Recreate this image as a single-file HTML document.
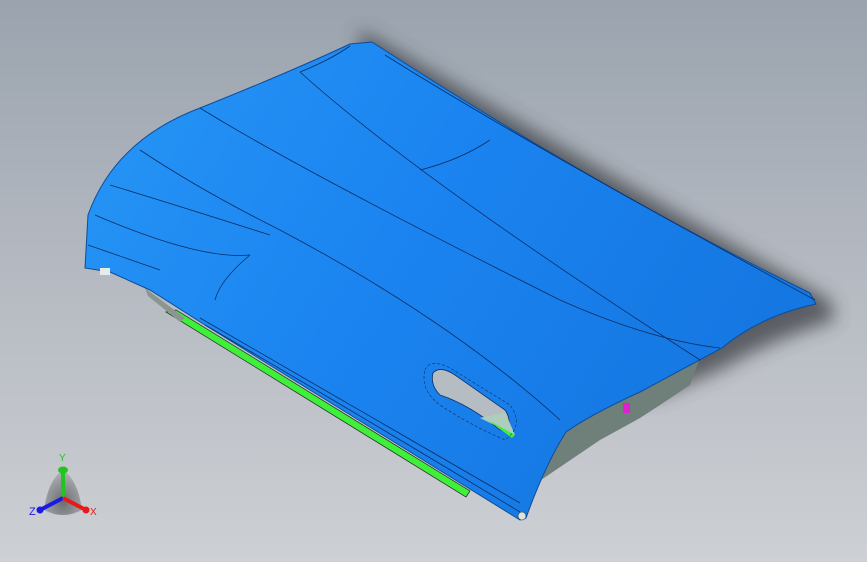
<!DOCTYPE html>
<html><head><style>
html,body{margin:0;padding:0;width:867px;height:562px;overflow:hidden;}
body{background:linear-gradient(180deg,#9aa3ae 0%,#b3b8c0 45%,#cdd0d4 100%);font-family:"Liberation Sans",sans-serif;}
svg{position:absolute;left:0;top:0}
</style></head><body>
<svg width="867" height="562" viewBox="0 0 867 562">
<defs>
<filter id="bl" x="-20%" y="-20%" width="140%" height="140%"><feGaussianBlur stdDeviation="9"/></filter>
<linearGradient id="bg1" x1="0" y1="0" x2="1" y2="0.4">
<stop offset="0" stop-color="#2796f6"/><stop offset="0.5" stop-color="#1b84f0"/><stop offset="1" stop-color="#1577e2"/>
</linearGradient>
<radialGradient id="tri" cx="0.5" cy="0.7" r="0.6"><stop offset="0" stop-color="#444"/><stop offset="1" stop-color="#9a9da2"/></radialGradient>
</defs>
<path d="M360,30 Q600,170 830,300 L835,320 Q770,340 720,370 L650,400 L360,60 Z" fill="#3a3d42" opacity="0.75" filter="url(#bl)"/>
<!-- underside gray -->
<path d="M538,482 L560,432 Q600,405 665,378 L700,358 L690,385 L660,405 L640,418 L600,440 Z" fill="#6f7f7a"/>
<rect x="623" y="403" width="7" height="10" fill="#e020d0"/>
<!-- green strip -->
<path d="M166,312 L176,310 L470,491 L466,497 Z" fill="#3ef03a" stroke="#222" stroke-width="0.7"/>
<path d="M145,288 L185,318 L180,322 L148,296 Z" fill="#8a9690"/>
<path d="M85,268 L88,215 Q115,140 200,108 Q290,72 350,44 L372,42 Q600,190 810,293 L816,304 Q760,316 722,348 Q690,365 640,392 Q590,415 566,432 Q545,465 526,518 L520,520 Q400,445 205,325 L150,290 L110,272 Z" fill="url(#bg1)" stroke="#0d4d9a" stroke-width="1"/>
<g fill="none" stroke="#0b2f66" stroke-width="0.8">
<path d="M350,46 Q330,60 300,72"/>
<path d="M300,72 Q420,180 700,360"/>
<path d="M200,108 Q300,170 560,300 Q650,340 720,348"/>
<path d="M140,150 Q200,190 280,230 Q450,320 560,420"/>
<path d="M110,185 Q160,200 270,235"/>
<path d="M95,215 Q200,260 250,255"/>
<path d="M88,245 L160,270"/>
<path d="M250,255 Q220,280 215,300"/>
<path d="M385,55 Q520,140 815,300"/>
<path d="M490,140 Q460,160 420,170"/>
<path d="M200,318 Q350,405 520,503"/>
<path d="M205,325 Q360,415 520,512"/>
</g>
<path d="M433,373 Q440,365 455,375 L505,410 Q515,425 500,430 Q470,405 440,395 Q430,385 433,373 Z" fill="#b5bcc2" stroke="#0b2f66" stroke-width="0.8"/>
<path d="M480,418 L505,412 L515,435 Z" fill="#aecdbd"/>
<path d="M488,420 L515,435 L512,438 Z" fill="#3ef03a"/>
<path d="M425,370 Q430,358 450,368 L510,405 Q525,425 505,440 Q470,425 440,405 Q420,390 425,370 Z" fill="none" stroke="#0b2f66" stroke-width="0.6" stroke-dasharray="3,2"/>
<circle cx="522" cy="516" r="4" fill="#d8e6dc" stroke="#333" stroke-width="0.6"/>
<rect x="100" y="268" width="10" height="7" fill="#e6ece8"/>
<path d="M44,510 Q48,480 63,470 Q78,480 82,510 Q63,520 44,510 Z" fill="url(#tri)" opacity="0.7"/>
<line x1="63" y1="498" x2="63" y2="470" stroke="#1fc61f" stroke-width="4"/>
<ellipse cx="63" cy="470" rx="5" ry="3.5" fill="#1fc61f"/>
<line x1="63" y1="498" x2="40" y2="510" stroke="#1a1ae6" stroke-width="4"/>
<circle cx="40" cy="510" r="3.5" fill="#1a1ae6"/>
<line x1="63" y1="498" x2="86" y2="510" stroke="#e61a1a" stroke-width="4"/>
<circle cx="86" cy="510" r="3.5" fill="#e61a1a"/>
<text x="59" y="461" font-size="10" fill="#1fc61f" font-family="Liberation Sans">Y</text>
<text x="29" y="515" font-size="11" fill="#1a1ae6" font-family="Liberation Sans">Z</text>
<text x="90" y="515" font-size="10" fill="#e61a1a" font-family="Liberation Sans">X</text>
</svg>
</body></html>
